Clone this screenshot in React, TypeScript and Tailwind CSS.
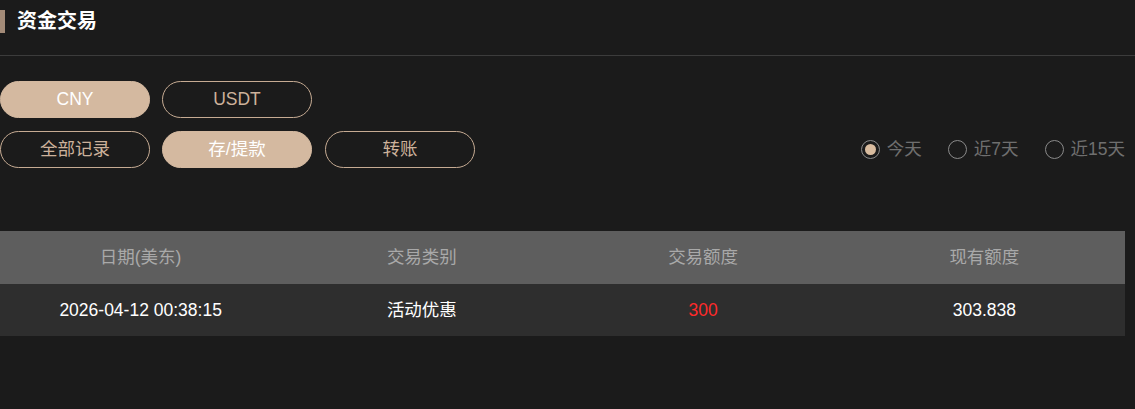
import React, { useState } from "react"

const font = { fontFamily: '"Liberation Sans", "Noto Sans CJK SC", sans-serif' }

function Pill({ label, active, onClick }: { label: string; active: boolean; onClick: () => void }) {
  return (
    <button
      onClick={onClick}
      className={
        active
          ? "w-[150px] h-[37px] rounded-full bg-[#d4b9a0] text-white text-[17.5px] border border-[#d4b9a0]"
          : "w-[150px] h-[37px] rounded-full border border-[#c6ab93] text-[#cdb29b] text-[17.5px]"
      }
    >
      {label}
    </button>
  )
}

function Radio({ label, checked, onClick }: { label: string; checked: boolean; onClick: () => void }) {
  return (
    <button onClick={onClick} className="flex items-center gap-[7px] text-[17.5px] text-[#6f6f6f]">
      <span className="w-[19px] h-[19px] rounded-full border-[1.5px] border-[#8a8a8a] flex items-center justify-center">
        {checked && <span className="w-[11px] h-[11px] rounded-full bg-[#d9bc9f]" />}
      </span>
      {label}
    </button>
  )
}

export default function App() {
  const [currency, setCurrency] = useState("CNY")
  const [kind, setKind] = useState("存/提款")
  const [range, setRange] = useState("今天")

  return (
    <div style={font} className="w-[1135px] h-[409px] bg-[#1b1b1b] overflow-hidden">
      <div className="h-[56px] flex items-start pt-[10px] border-b border-[#3c3c3c]">
        <div className="flex items-center gap-3">
          <span className="w-[5px] h-[23px] bg-[#a38b78]" />
          <span className="text-white font-bold text-[20px] leading-[23px]">资金交易</span>
        </div>
      </div>

      <div className="pt-[25px] flex flex-col gap-[13px]">
        <div className="flex gap-3">
          {["CNY", "USDT"].map((c) => (
            <Pill key={c} label={c} active={currency === c} onClick={() => setCurrency(c)} />
          ))}
        </div>
        <div className="flex items-center">
          <div className="flex gap-3 flex-1">
            {["全部记录", "存/提款"].map((k) => (
              <Pill key={k} label={k} active={kind === k} onClick={() => setKind(k)} />
            ))}
            <div className="ml-px">
              <Pill label="转账" active={kind === "转账"} onClick={() => setKind("转账")} />
            </div>
          </div>
          <div className="flex items-center gap-[26px] pr-[10px]">
            {["今天", "近7天", "近15天"].map((r) => (
              <Radio key={r} label={r} checked={range === r} onClick={() => setRange(r)} />
            ))}
          </div>
        </div>
      </div>

      <div className="mt-[63px] w-[1125px]">
        <div className="grid grid-cols-4 h-[53px] bg-[#5e5e5e] text-[#a9a9a9] text-[17.5px] items-center text-center">
          <div>日期(美东)</div>
          <div>交易类别</div>
          <div>交易额度</div>
          <div>现有额度</div>
        </div>
        <div className="grid grid-cols-4 h-[52px] bg-[#2e2e2e] text-white text-[17.5px] items-center text-center">
          <div>2026-04-12 00:38:15</div>
          <div>活动优惠</div>
          <div className="text-[#ff2a2a]">300</div>
          <div>303.838</div>
        </div>
      </div>
    </div>
  )
}
